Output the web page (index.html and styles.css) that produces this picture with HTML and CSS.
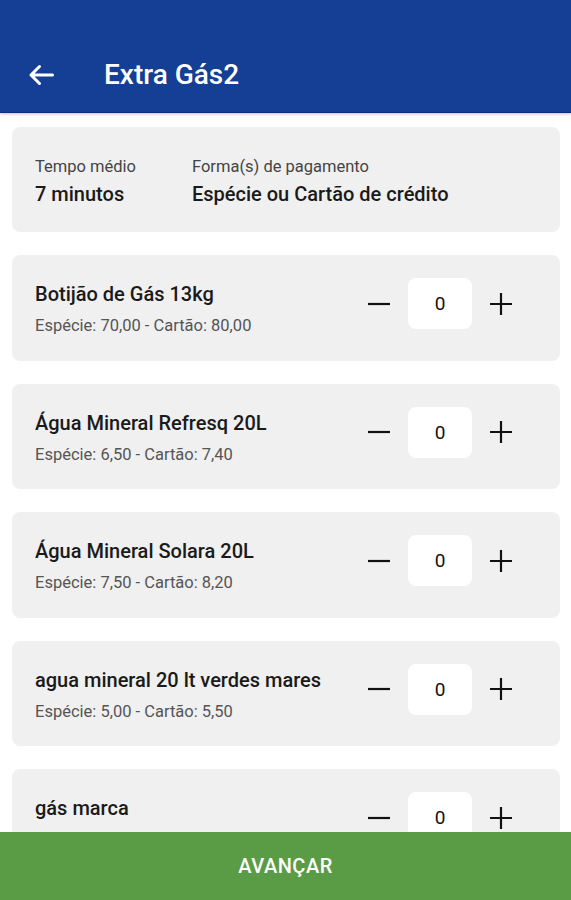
FILE: index.html
```html
<!DOCTYPE html>
<html lang="pt">
<head>
    <meta charset="UTF-8">
    <meta name="viewport" content="width=device-width, initial-scale=1.0">
    <title>Extra Gás2</title>
    <link rel="stylesheet" href="styles.css">
</head>
<body>
<div class="screen">
    <div class="topbar">
        <svg class="back" width="26" height="22" viewBox="0 0 26 22">
            <path d="M24.5 11H3M11.5 2.5L3 11l8.5 8.5" fill="none" stroke="#fff" stroke-width="3" stroke-linecap="round" stroke-linejoin="round"/>
        </svg>
        <h1 class="title">Extra Gás2</h1>
    </div>

    <div class="content">
        <div class="card info">
            <div class="info-col">
                <span class="label">Tempo médio</span>
                <span class="value">7 minutos</span>
            </div>
            <div class="info-col">
                <span class="label">Forma(s) de pagamento</span>
                <span class="value">Espécie ou Cartão de crédito</span>
            </div>
        </div>

        <div class="card product">
            <div class="product-text">
                <span class="name">Botijão de Gás 13kg</span>
                <span class="price">Espécie: 70,00 - Cartão: 80,00</span>
            </div>
            <div class="qty">
                <svg class="qty-btn" width="24" height="24" viewBox="0 0 24 24"><path d="M1 12h22" stroke="#111" stroke-width="2.2"/></svg>
                <div class="count">0</div>
                <svg class="qty-btn" width="24" height="24" viewBox="0 0 24 24"><path d="M1 12h22M12 1v22" stroke="#111" stroke-width="2.2"/></svg>
            </div>
        </div>

        <div class="card product">
            <div class="product-text">
                <span class="name">Água Mineral Refresq 20L</span>
                <span class="price">Espécie: 6,50 - Cartão: 7,40</span>
            </div>
            <div class="qty">
                <svg class="qty-btn" width="24" height="24" viewBox="0 0 24 24"><path d="M1 12h22" stroke="#111" stroke-width="2.2"/></svg>
                <div class="count">0</div>
                <svg class="qty-btn" width="24" height="24" viewBox="0 0 24 24"><path d="M1 12h22M12 1v22" stroke="#111" stroke-width="2.2"/></svg>
            </div>
        </div>

        <div class="card product">
            <div class="product-text">
                <span class="name">Água Mineral Solara 20L</span>
                <span class="price">Espécie: 7,50 - Cartão: 8,20</span>
            </div>
            <div class="qty">
                <svg class="qty-btn" width="24" height="24" viewBox="0 0 24 24"><path d="M1 12h22" stroke="#111" stroke-width="2.2"/></svg>
                <div class="count">0</div>
                <svg class="qty-btn" width="24" height="24" viewBox="0 0 24 24"><path d="M1 12h22M12 1v22" stroke="#111" stroke-width="2.2"/></svg>
            </div>
        </div>

        <div class="card product">
            <div class="product-text">
                <span class="name">agua mineral 20 lt verdes mares</span>
                <span class="price">Espécie: 5,00 - Cartão: 5,50</span>
            </div>
            <div class="qty">
                <svg class="qty-btn" width="24" height="24" viewBox="0 0 24 24"><path d="M1 12h22" stroke="#111" stroke-width="2.2"/></svg>
                <div class="count">0</div>
                <svg class="qty-btn" width="24" height="24" viewBox="0 0 24 24"><path d="M1 12h22M12 1v22" stroke="#111" stroke-width="2.2"/></svg>
            </div>
        </div>

        <div class="card product">
            <div class="product-text">
                <span class="name">gás marca</span>
            </div>
            <div class="qty">
                <svg class="qty-btn" width="24" height="24" viewBox="0 0 24 24"><path d="M1 12h22" stroke="#111" stroke-width="2.2"/></svg>
                <div class="count">0</div>
                <svg class="qty-btn" width="24" height="24" viewBox="0 0 24 24"><path d="M1 12h22M12 1v22" stroke="#111" stroke-width="2.2"/></svg>
            </div>
        </div>
    </div>

    <button class="next">AVANÇAR</button>
</div>
</body>
</html>
```

FILE: styles.css
```css
body {
    margin: 0;
    font-family: Roboto, "Noto Sans", sans-serif;
    background: #fff;
}

.screen {
    display: flex;
    flex-direction: column;
    width: 571px;
    height: 900px;
    overflow: hidden;
}

.topbar {
    flex: none;
    display: flex;
    align-items: center;
    height: 113px;
    padding: 37px 0 0 28px;
    box-sizing: border-box;
    background: #143f94;
    border-bottom: 1px solid #0c2f7a;
    box-shadow: 0 1px 3px rgba(0, 0, 0, 0.25);
    position: relative;
    z-index: 1;
}

.back {
    display: block;
}

.title {
    margin: 0 0 0 50px;
    color: #fff;
    font-size: 28px;
    font-weight: 500;
}

.content {
    flex: 1;
    overflow: hidden;
    display: flex;
    flex-direction: column;
    gap: 23px;
    padding: 14px 11px 0 12px;
}

.card {
    flex: none;
    background: #f0f0f0;
    border-radius: 8px;
    box-sizing: border-box;
}

.info {
    display: flex;
    gap: 56px;
    height: 105px;
    padding: 30px 23px 0;
}

.info-col {
    display: flex;
    flex-direction: column;
    gap: 6px;
}

.label {
    font-size: 16.5px;
    color: #444;
}

.value {
    font-size: 20px;
    font-weight: 500;
    color: #1a1a1a;
}

.product {
    display: flex;
    align-items: flex-start;
    justify-content: space-between;
    height: 105.5px;
    padding: 0 47px 0 23px;
}

.product-text {
    display: flex;
    flex-direction: column;
    gap: 10px;
    padding-top: 27px;
}

.name {
    font-size: 20px;
    font-weight: 500;
    color: #1a1a1a;
}

.price {
    font-size: 16.5px;
    color: #555;
}

.qty {
    display: flex;
    align-items: center;
    gap: 17px;
    margin-top: 23px;
}

.qty-btn {
    display: block;
}

.count {
    width: 64px;
    height: 51px;
    display: flex;
    align-items: center;
    justify-content: center;
    background: #fff;
    border-radius: 8px;
    font-size: 19px;
    color: #111;
}

.next {
    flex: none;
    height: 68px;
    border: none;
    background: #5a9b45;
    color: #fff;
    font-family: Roboto, sans-serif;
    font-size: 20px;
    font-weight: 500;
    letter-spacing: 0.5px;
    padding: 0;
    position: relative;
    z-index: 1;
}
```
